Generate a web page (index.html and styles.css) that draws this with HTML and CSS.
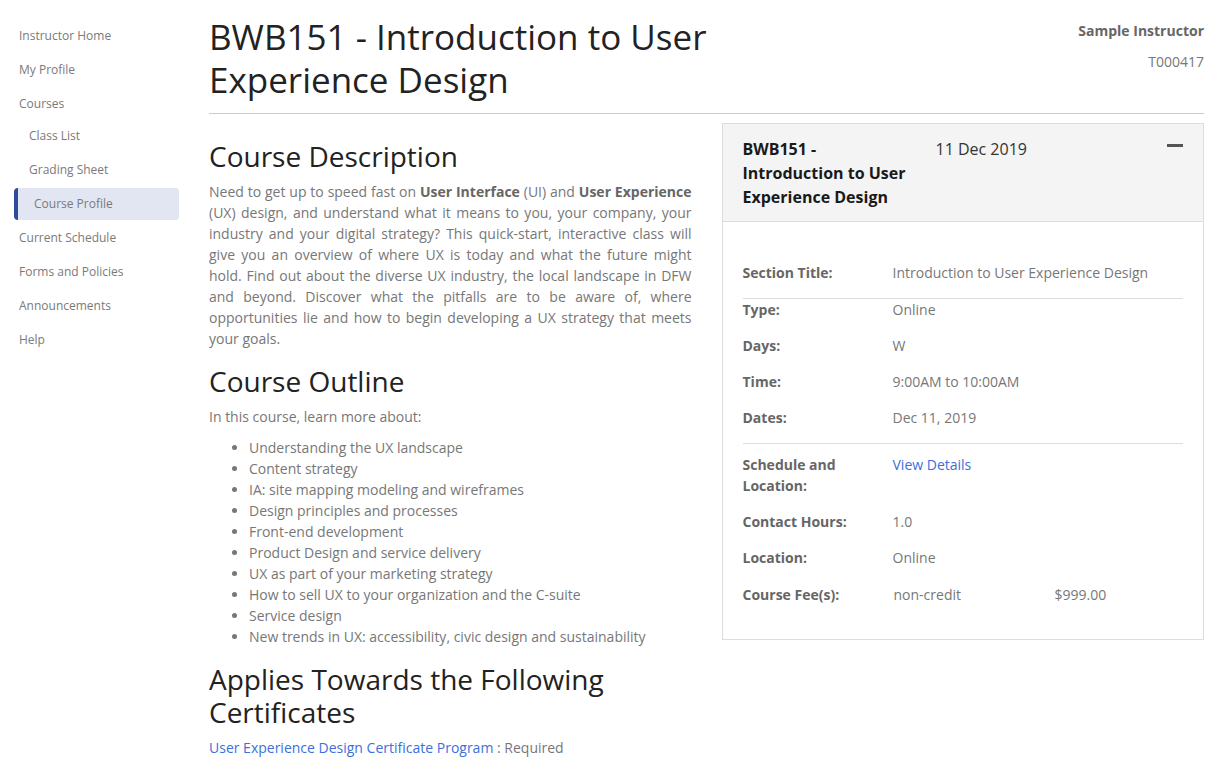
FILE: index.html
```html
<!DOCTYPE html>
<html lang="en">
<head>
<meta charset="utf-8">
<title>BWB151 - Introduction to User Experience Design</title>
<link rel="stylesheet" href="styles.css">
</head>
<body>
<div class="page">
  <nav class="sidebar">
    <ul class="nav">
      <li><a href="#">Instructor Home</a></li>
      <li><a href="#">My Profile</a></li>
      <li class="parent"><a href="#">Courses</a>
        <ul class="subnav">
          <li><a href="#">Class List</a></li>
          <li><a href="#">Grading Sheet</a></li>
          <li><a href="#" class="active">Course Profile</a></li>
        </ul>
      </li>
      <li><a href="#">Current Schedule</a></li>
      <li><a href="#">Forms and Policies</a></li>
      <li><a href="#">Announcements</a></li>
      <li><a href="#">Help</a></li>
    </ul>
  </nav>
  <main class="main">
    <header class="page-header">
      <h1 class="title">BWB151 - Introduction to User Experience Design</h1>
      <div class="user">
        <div class="user-name">Sample Instructor</div>
        <div class="user-id">T000417</div>
      </div>
    </header>
    <div class="content">
      <section class="details">
        <h2>Course Description</h2>
        <p class="desc">Need to get up to speed fast on <strong>User Interface</strong> (UI) and <strong>User Experience</strong> (UX) design, and understand what it means to you, your company, your industry and your digital strategy? This quick-start, interactive class will give you an overview of where UX is today and what the future might hold. Find out about the diverse UX industry, the local landscape in DFW and beyond. Discover what the pitfalls are to be aware of, where opportunities lie and how to begin developing a UX strategy that meets your goals.</p>
        <h2>Course Outline</h2>
        <p class="intro">In this course, learn more about:</p>
        <ul class="outline">
          <li>Understanding the UX landscape</li>
          <li>Content strategy</li>
          <li>IA: site mapping modeling and wireframes</li>
          <li>Design principles and processes</li>
          <li>Front-end development</li>
          <li>Product Design and service delivery</li>
          <li>UX as part of your marketing strategy</li>
          <li>How to sell UX to your organization and the C-suite</li>
          <li>Service design</li>
          <li>New trends in UX: accessibility, civic design and sustainability</li>
        </ul>
        <h2>Applies Towards the Following Certificates</h2>
        <p class="cert"><a href="#">User Experience Design Certificate Program</a> : Required</p>
      </section>
      <aside class="panel">
        <div class="panel-head">
          <div class="panel-title">BWB151 - Introduction to User Experience Design</div>
          <div class="panel-date">11 Dec 2019</div>
          <button class="collapse" aria-label="Collapse"><span class="minus"></span></button>
        </div>
        <div class="panel-body">
          <div class="group">
            <div class="row"><div class="label">Section Title:</div><div class="value">Introduction to User Experience Design</div></div>
          </div>
          <div class="group">
            <div class="row"><div class="label">Type:</div><div class="value">Online</div></div>
            <div class="row"><div class="label">Days:</div><div class="value">W</div></div>
            <div class="row"><div class="label">Time:</div><div class="value">9:00AM to 10:00AM</div></div>
            <div class="row"><div class="label">Dates:</div><div class="value">Dec 11, 2019</div></div>
          </div>
          <div class="group last">
            <div class="row"><div class="label">Schedule and<br>Location:</div><div class="value"><a href="#">View Details</a></div></div>
            <div class="row"><div class="label">Contact Hours:</div><div class="value">1.0</div></div>
            <div class="row"><div class="label">Location:</div><div class="value">Online</div></div>
            <div class="row fee-row"><div class="label">Course Fee(s):</div><div class="value fee"><span class="fee-type">non-credit</span><span>$999.00</span></div></div>
          </div>
        </div>
      </aside>
    </div>
  </main>
</div>
</body>
</html>
```

FILE: styles.css
```css
* { box-sizing: border-box; }

html, body {
  margin: 0;
  padding: 0;
  background: #fff;
}

body {
  font-family: "Open Sans", "Liberation Sans", sans-serif;
  font-size: 14px;
  line-height: 21px;
  color: #777;
}

a { color: #3c6fdc; text-decoration: none; }

.page {
  display: flex;
  gap: 30px;
  padding: 0 20px 0 14px;
}

/* Sidebar */
.sidebar {
  width: 165px;
  flex: 0 0 165px;
  padding-top: 20px;
}

.nav, .subnav {
  list-style: none;
  margin: 0;
  padding: 0;
}

.nav a {
  display: block;
  height: 32px;
  line-height: 32px;
  margin-bottom: 2px;
  padding-left: 5px;
  font-size: 12px;
  color: #7a7a7a;
  border-radius: 4px;
}

.nav .parent > a { margin-bottom: 0; }

.subnav a { padding-left: 15px; }

.subnav a.active {
  background: #e2e6f2;
  border-left: 4px solid #2e4a9b;
  padding-left: 16px;
  color: #7a7a7a;
}

/* Main */
.main {
  flex: 1;
  min-width: 0;
}

.page-header {
  display: grid;
  grid-template-columns: 2fr 1fr;
  padding-top: 15px;
  border-bottom: 1px solid #ccc;
  padding-bottom: 12px;
}

.title {
  margin: 0;
  font-size: 35px;
  line-height: 43px;
  font-weight: 400;
  color: #222;
}

.user {
  text-align: right;
  padding-top: 5px;
}

.user-name {
  font-weight: 700;
  color: #666;
  line-height: 21px;
}

.user-id {
  margin-top: 10px;
  color: #777;
  line-height: 21px;
}

.content {
  display: grid;
  grid-template-columns: 1fr 1fr;
  gap: 30px;
  margin-top: 9px;
  align-items: start;
}

.details h2 {
  margin: 16px 0 8px;
  font-size: 28px;
  line-height: 33px;
  font-weight: 400;
  color: #222;
}

.details h2:first-child { margin-top: 17px; }

.details p { margin: 0; }

.desc { text-align: justify; }

.desc strong { color: #666; font-weight: 700; }

.intro { margin-bottom: 10px !important; }

.outline {
  margin: 0;
  padding-left: 40px;
}

.cert { margin-top: 0; }

/* Panel */
.panel {
  border: 1px solid #ddd;
}

.panel-head {
  display: flex;
  align-items: flex-start;
  background: #f4f4f4;
  border-bottom: 1px solid #ddd;
  padding: 13px 20px 12px;
}

.panel-title {
  width: 175px;
  font-size: 16px;
  line-height: 24px;
  font-weight: 700;
  color: #1a1a1a;
}

.panel-date {
  margin-left: 18px;
  font-size: 16px;
  line-height: 24px;
  color: #333;
}

.collapse {
  margin-left: auto;
  margin-top: 7px;
  width: 16px;
  height: 3px;
  padding: 0;
  border: 0;
  background: transparent;
  cursor: pointer;
}

.minus {
  display: block;
  width: 16px;
  height: 3px;
  background: #555;
}

.panel-body {
  padding: 40px 20px 19px;
}

.group { border-bottom: 1px solid #ddd; }

.group.last { border-bottom: 0; padding-top: 10px; }

.row {
  display: flex;
  padding-bottom: 15px;
}

.fee-row { padding-top: 1px; }

.label {
  width: 150px;
  flex: 0 0 150px;
  font-weight: 700;
  color: #666;
}

.value { color: #777; }

.fee { display: flex; padding-left: 1px; }

.fee-type { width: 161px; }
```
